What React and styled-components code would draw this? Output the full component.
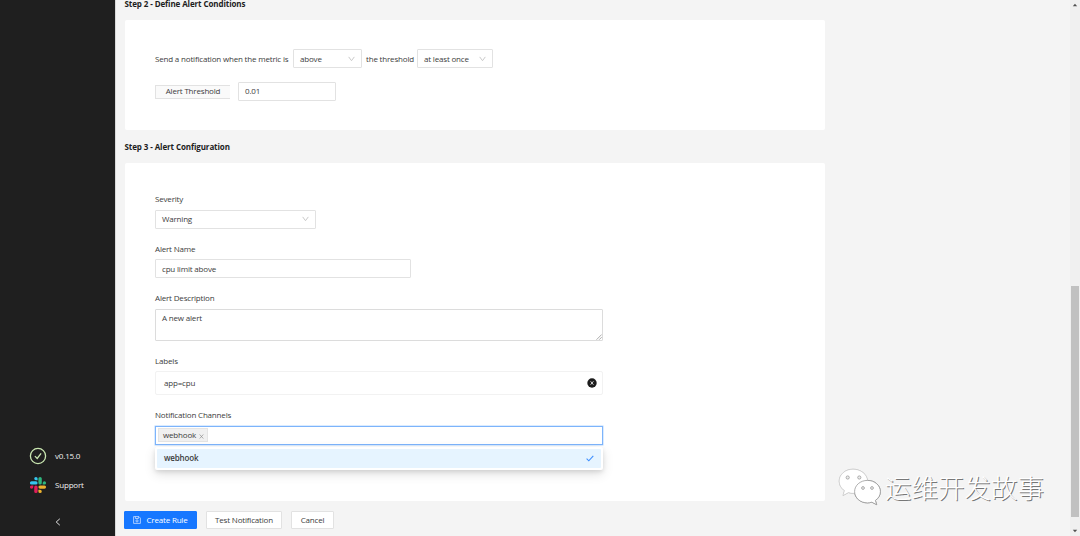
import styled, { createGlobalStyle } from "styled-components";

const App = () => {
  return (
    <>
      <GlobalStyle />
      <Page>
        <Sidebar>
          <SideItem $height={29}>
            <CheckIcon />
            <span>v0.15.0</span>
          </SideItem>
          <SideItem $height={28}>
            <SlackIcon />
            <span>Support</span>
          </SideItem>
          <Collapse>
            <svg width="6" height="8" viewBox="0 0 6 8" fill="none" stroke="#e0e0e0" strokeWidth="1">
              <path d="M4.8 0.8 L1.2 4 L4.8 7.2" />
            </svg>
          </Collapse>
        </Sidebar>

        <Main>
          <StepTitle>Step 2 - Define Alert Conditions</StepTitle>
          <Card $height={110} $top={29}>
            <Sentence>
              <Words $width={138}>Send a notification when the metric is</Words>
              <Select $low $width={69}>above<Chevron /></Select>
              <Words $width={47} $indent={4}>the threshold</Words>
              <Select $low $width={76} $gap={4}>at least once<Chevron /></Select>
            </Sentence>
            <Threshold>
              <Addon>Alert Threshold</Addon>
              <Input $width={98}>0.01</Input>
            </Threshold>
          </Card>

          <StepTitle $next>Step 3 - Alert Configuration</StepTitle>
          <Card $height={338} $top={29}>
            <Field $height={50}>
              <Label>Severity</Label>
              <Select $width={161}>Warning<Chevron /></Select>
            </Field>
            <Field $height={49}>
              <Label $tight>Alert Name</Label>
              <Input $low $width={256}>cpu limit above</Input>
            </Field>
            <Field $height={63}>
              <Label>Alert Description</Label>
              <TextArea>
                A new alert
                <Grip />
              </TextArea>
            </Field>
            <Field $height={54}>
              <Label $tight>Labels</Label>
              <LabelsBox>
                app=cpu
                <ClearIcon />
              </LabelsBox>
            </Field>
            <Field $height={60}>
              <Label>Notification Channels</Label>
              <Channels>
                <Tag>webhook<TagClose /></Tag>
                <Dropdown>
                  <Option>
                    webhook
                    <svg width="8" height="7" viewBox="0 0 8 7" fill="none" stroke="#3f8fff" strokeWidth="1.1">
                      <path d="M0.6 3.6 L2.8 5.8 L7.3 0.8" />
                    </svg>
                  </Option>
                </Dropdown>
              </Channels>
            </Field>
          </Card>

          <Actions>
            <Button $primary $width={73}>
              <SaveIcon />
              Create Rule
            </Button>
            <Button $width={76}>Test Notification</Button>
            <Button $width={43}>Cancel</Button>
          </Actions>
        </Main>

        <ScrollTrack>
          <Arrow viewBox="0 0 6 4"><path d="M0.8 3.2 L3 0.8 L5.2 3.2Z" /></Arrow>
          <Thumb />
          <Arrow viewBox="0 0 6 4"><path d="M0.8 0.8 L3 3.2 L5.2 0.8Z" /></Arrow>
        </ScrollTrack>

        <Watermark>
          <WechatIcon />
          <span>运维开发故事</span>
        </Watermark>
      </Page>
    </>
  );
};

const Chevron = () => (
  <svg width="7" height="6" viewBox="0 0 7 6" fill="none" stroke="#c4c4c4" strokeWidth="0.9">
    <path d="M0.7 0.9 L3.5 4.7 L6.3 0.9" />
  </svg>
);

const CheckIcon = () => (
  <svg width="18" height="18" viewBox="0 0 18 18" fill="none" stroke="#c9e6b0" strokeWidth="1.3">
    <circle cx="9" cy="9" r="7.6" />
    <path d="M5.9 9.1 L8.2 11.4 L12.1 6.3" />
  </svg>
);

const SlackIcon = () => (
  <svg width="18" height="18" viewBox="-7 -7 138 138">
    <path fill="#e01e5a" d="M26 78a13 13 0 1 1-13-13h13zM33 78a13 13 0 0 1 26 0v33a13 13 0 0 1-26 0z" />
    <path fill="#36c5f0" d="M46 26a13 13 0 1 1 13-13v13zM46 33a13 13 0 0 1 0 26H13a13 13 0 0 1 0-26z" />
    <path fill="#2eb67d" d="M98 46a13 13 0 1 1 13 13H98zM91 46a13 13 0 0 1-26 0V13a13 13 0 0 1 26 0z" />
    <path fill="#ecb22e" d="M78 98a13 13 0 1 1-13 13V98zM78 91a13 13 0 0 1 0-26h33a13 13 0 0 1 0 26z" />
  </svg>
);

const SaveIcon = () => (
  <svg width="8" height="8" viewBox="0 0 8 8" fill="none" stroke="#d5e6ff" strokeWidth="0.75">
    <path d="M0.6 0.6H5.9L7.4 2.1V7.4H0.6Z" />
    <path d="M2.4 0.6V2.5H5.4V0.6" />
    <circle cx="4" cy="4.9" r="1.1" />
  </svg>
);

const ClearIcon = () => (
  <svg width="10" height="10" viewBox="0 0 10 10">
    <circle cx="5" cy="5" r="4.7" fill="#1c1c1c" />
    <path d="M3.6 3.3 L6.4 6.7 M6.4 3.3 L3.6 6.7" stroke="#fff" strokeWidth="0.8" />
  </svg>
);

const TagClose = () => (
  <svg width="5" height="5" viewBox="0 0 5 5" stroke="#8c8c8c" strokeWidth="0.7">
    <path d="M0.7 0.5 L4.3 4.5 M4.3 0.5 L0.7 4.5" />
  </svg>
);

const WechatIcon = () => (
  <Bubbles width="44" height="38" viewBox="0 0 44 38">
    <g fill="#fff" stroke="#d0d0d0" strokeWidth="0.5">
      <path d="M15 1.2C7.2 1.2 1.2 6.5 1.2 13.2c0 4 2 7.2 5.3 9.4L5 27.5l5.4-2.9c1.6.5 3 .7 4.6.7 7.8 0 14.5-5.3 14.5-12.1S22.8 1.2 15 1.2z" />
      <path stroke="#999" strokeWidth="0.8" d="M29.5 12.4c-7.2 0-12.9 4.9-12.9 11.2s5.7 11.3 12.9 11.3c1.4 0 2.9-.3 4.3-.7l4.9 2.5-1.3-4.3c3.2-2.1 5-5.2 5-8.8 0-6.3-5.7-11.2-12.9-11.2z" />
    </g>
    <g fill="#ededed" stroke="#9a9a9a" strokeWidth="0.8">
      <circle cx="9.7" cy="9.5" r="1.6" />
      <circle cx="21.3" cy="9.5" r="1.6" />
      <circle cx="25" cy="20" r="1.4" />
      <circle cx="34" cy="20" r="1.4" />
    </g>
  </Bubbles>
);

const Bubbles = styled.svg`
  filter: drop-shadow(0.4px 0.7px 0.4px #999);
`;

const GripSvg = (props) => (
  <svg {...props} width="6" height="6" viewBox="0 0 6 6" stroke="#8a8a8a" strokeWidth="0.7">
    <path d="M0.5 5.7 L5.7 0.5 M3.2 5.7 L5.7 3.2" />
  </svg>
);

const GlobalStyle = createGlobalStyle`
  * {
    box-sizing: border-box;
  }
  body {
    margin: 0;
    overflow: hidden;
    font-family: "Open Sans", "Noto Sans", sans-serif;
    font-size: 8px;
    line-height: 12px;
    letter-spacing: -0.18px;
    color: #3c3c3c;
  }
  svg {
    flex-shrink: 0;
    display: block;
  }
`;

const Page = styled.div`
  position: relative;
  display: flex;
  width: 1080px;
  height: 536px;
  overflow: hidden;
  background: #f4f4f4;
`;

const Sidebar = styled.div`
  display: flex;
  flex-direction: column;
  justify-content: flex-end;
  width: 115px;
  flex-shrink: 0;
  background: #1f1f1f;
  color: #f0f0f0;
`;

const SideItem = styled.div`
  display: flex;
  align-items: center;
  gap: 8px;
  height: ${(p) => p.$height}px;
  padding-left: 29px;
  padding-bottom: ${(p) => p.$height - 28}px;
`;

const Collapse = styled.div`
  display: flex;
  justify-content: center;
  align-items: center;
  height: 28px;
  margin-top: 9px;
`;

const Main = styled.div`
  display: flex;
  flex-direction: column;
  flex: 1;
  padding-left: 9px;
  border-left: 1px solid #d9d9d9;
`;

const StepTitle = styled.div`
  height: ${(p) => (p.$next ? "14px" : "10px")};
  line-height: ${(p) => (p.$next ? "14px" : "8px")};
  margin-top: ${(p) => (p.$next ? "10px" : "0")};
  margin-bottom: ${(p) => (p.$next ? "9px" : "10px")};
  margin-left: -0.5px;
  font-weight: 700;
  letter-spacing: -0.1px;
  color: #1d1d1d;
`;

const Card = styled.div`
  width: 700px;
  height: ${(p) => p.$height}px;
  padding: ${(p) => p.$top}px 30px 0;
  background: #fff;
  border-radius: 2px;
`;

const Sentence = styled.div`
  display: flex;
  align-items: center;
  height: 19px;
`;

const Words = styled.span`
  width: ${(p) => p.$width + (p.$indent || 0)}px;
  padding-left: ${(p) => p.$indent || 0}px;
  padding-top: 1px;
  white-space: nowrap;
`;

const Input = styled.div`
  display: flex;
  align-items: center;
  width: ${(p) => p.$width}px;
  height: 19px;
  padding: ${(p) => (p.$low ? "1px 6px 0" : "0 6px 1px")};
  border: 1px solid #e2e2e2;
  border-radius: 1px;
  background: #fff;
  white-space: nowrap;
`;

const Select = styled(Input)`
  justify-content: space-between;
  margin-left: ${(p) => p.$gap || 0}px;
`;

const Threshold = styled.div`
  display: flex;
  align-items: center;
  gap: 8px;
  margin-top: 14px;
`;

const Addon = styled.div`
  width: 75px;
  height: 14px;
  line-height: 10px;
  text-align: center;
  border: 1px solid #e2e2e2;
  border-right: none;
  background: #fafafa;
`;

const Field = styled.div`
  height: ${(p) => p.$height}px;
`;

const Label = styled.div`
  height: ${(p) => (p.$tight ? 17 : 18)}px;
  line-height: 14px;
`;

const TextArea = styled.div`
  position: relative;
  width: 448px;
  height: 32px;
  padding: 2px 6px;
  border: 1px solid #dcdcdc;
  border-radius: 1px;
`;

const Grip = styled(GripSvg)`
  position: absolute;
  right: 0;
  bottom: 0;
`;

const LabelsBox = styled.div`
  display: flex;
  align-items: center;
  justify-content: space-between;
  width: 448px;
  height: 24px;
  padding: 0 5px 0 8px;
  border: 1px solid #f2f2f2;
  border-radius: 2px;
`;

const Channels = styled.div`
  position: relative;
  display: flex;
  align-items: center;
  width: 448px;
  height: 19px;
  padding-left: 2px;
  padding-bottom: 1px;
  border: 1px solid #7db4fb;
  box-shadow: 0 0 0 0.5px #b5d6ff;
`;

const Tag = styled.div`
  display: flex;
  align-items: center;
  gap: 3px;
  height: 14px;
  padding: 0 3px 0 4px;
  border: 1px solid #e4e4e4;
  background: #f0f0f0;
  line-height: 10px;

  svg {
    margin-top: 2px;
  }
`;

const Dropdown = styled.div`
  position: absolute;
  top: 20px;
  left: -1px;
  width: 448px;
  padding: 2px;
  background: #fff;
  border-radius: 2px;
  box-shadow: 0 4px 12px rgba(0, 0, 0, 0.12), 0 2px 4px rgba(0, 0, 0, 0.1);
`;

const Option = styled.div`
  display: flex;
  align-items: center;
  justify-content: space-between;
  height: 19px;
  padding: 0 7px 1px;
  background: #e6f4ff;
  border-radius: 1px;
  font-weight: 600;
`;

const Actions = styled.div`
  display: flex;
  gap: 9px;
  margin-top: 10px;
  margin-left: -1px;
`;

const Button = styled.div`
  display: flex;
  align-items: center;
  justify-content: center;
  gap: 5px;
  width: ${(p) => p.$width}px;
  height: 18px;
  border: 1px solid ${(p) => (p.$primary ? "#1677ff" : "#e2e2e2")};
  border-radius: 1px;
  background: ${(p) => (p.$primary ? "#1677ff" : "#fff")};
  color: ${(p) => (p.$primary ? "#fff" : "#3c3c3c")};
`;

const ScrollTrack = styled.div`
  display: flex;
  flex-direction: column;
  align-items: center;
  justify-content: space-between;
  width: 10px;
  padding: 3px 0;
  background: #f0f0f0;
`;

const Arrow = styled.svg`
  width: 6px;
  height: 4px;
  fill: #505050;
`;

const Thumb = styled.div`
  width: 8px;
  height: 231px;
  margin-top: 279px;
  margin-bottom: 12px;
  background: #c1c1c1;
`;

const Watermark = styled.div`
  position: absolute;
  left: 838px;
  top: 468px;
  display: flex;
  align-items: center;
  gap: 3px;
  font-family: "Noto Sans CJK SC", sans-serif;
  font-size: 26.5px;
  font-weight: 300;
  letter-spacing: 0;
  line-height: 38px;
  color: #fff;
  text-shadow: 1px 1px 0.5px #777;
  white-space: nowrap;
`;

export default App;
